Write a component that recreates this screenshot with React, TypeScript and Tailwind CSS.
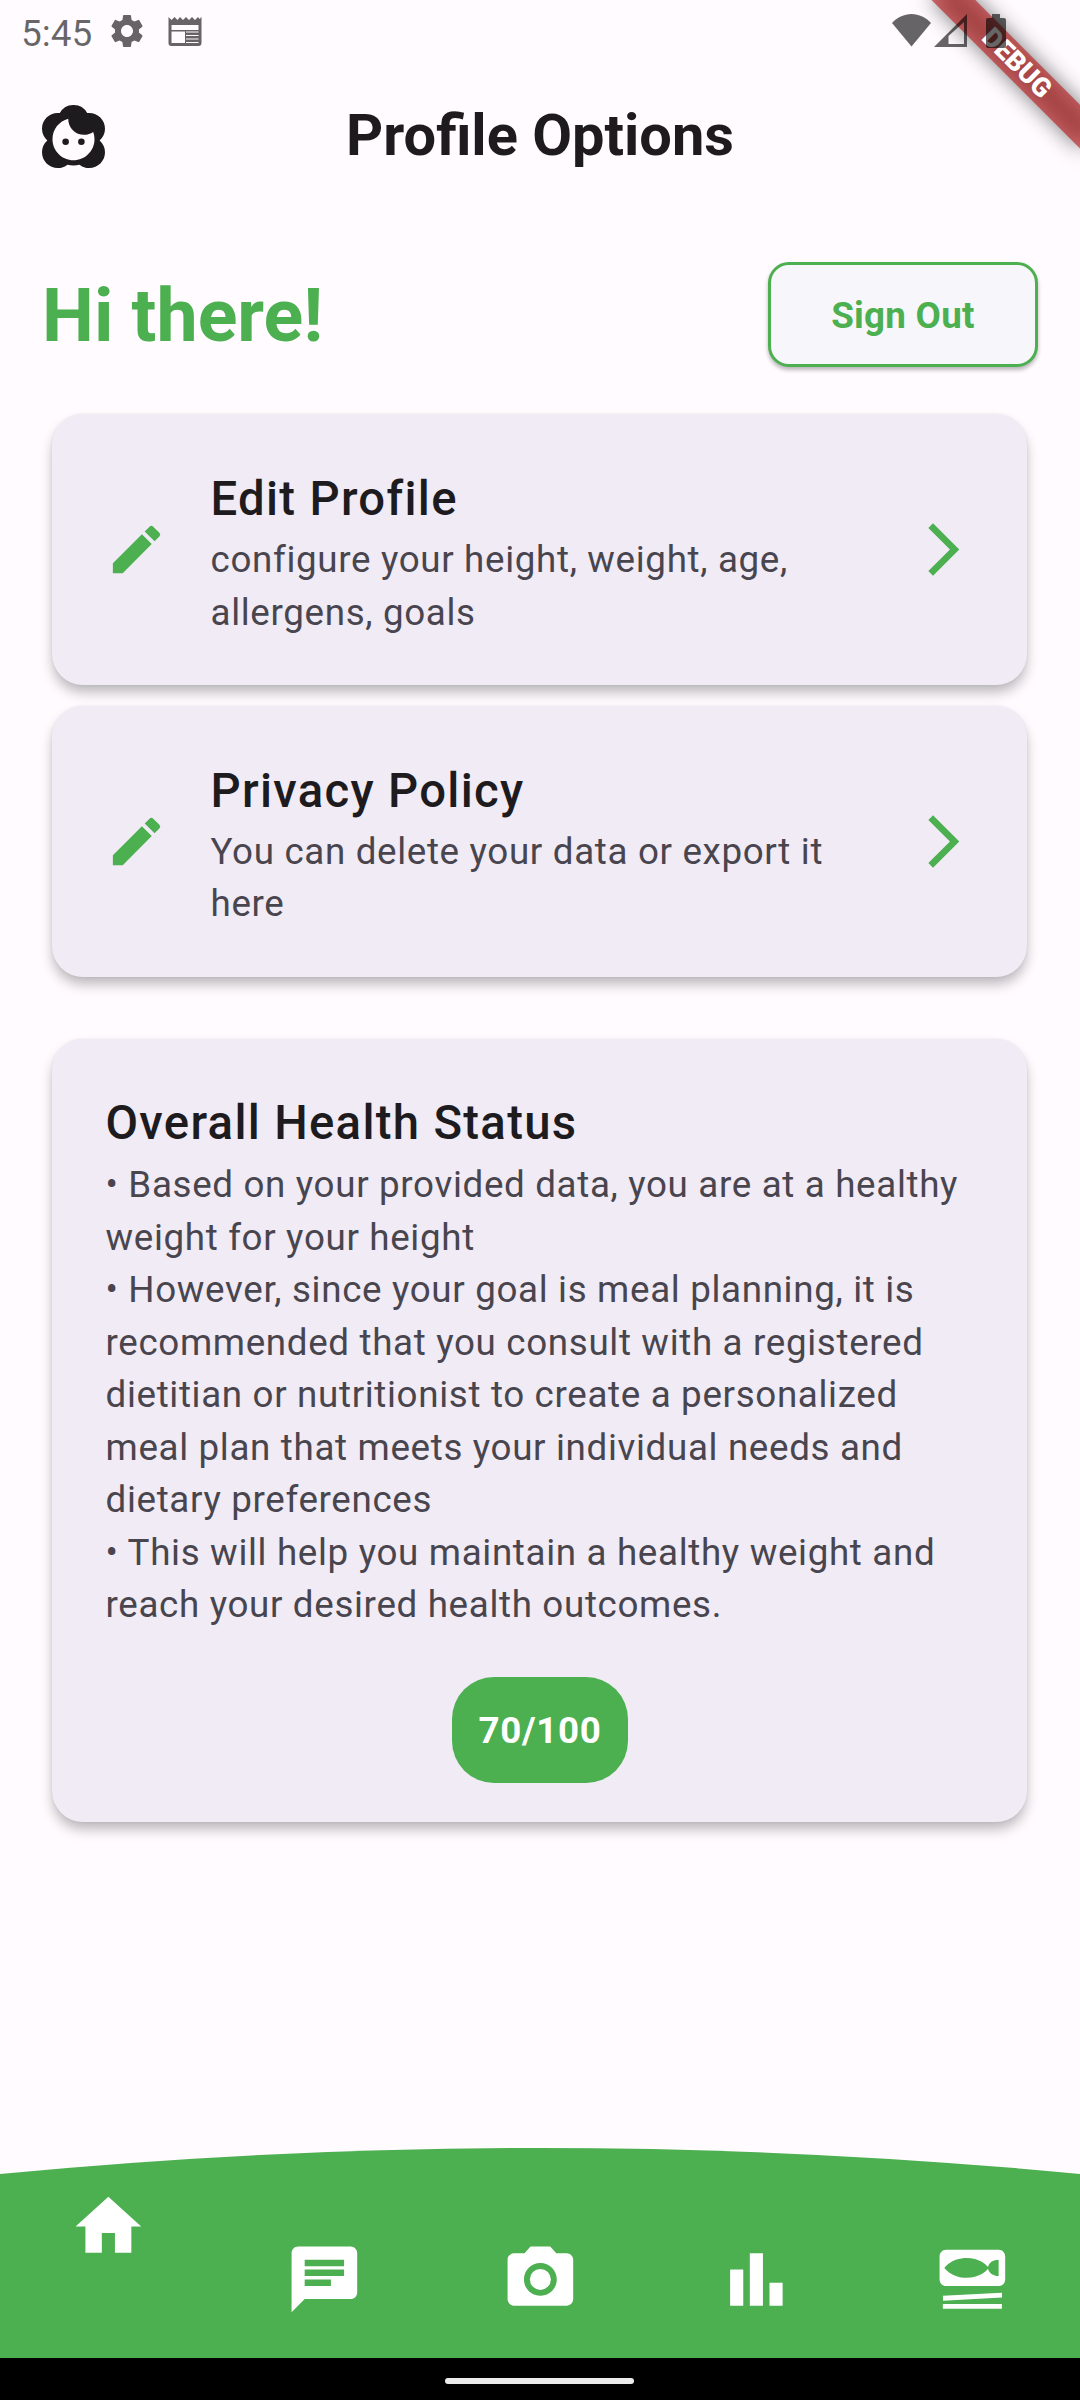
import type { ReactNode } from "react";
import { MdBarChart, MdCameraAlt, MdChat, MdEdit, MdFace2, MdHome, MdSetMeal, MdSettings } from "react-icons/md";

const cardClass =
  "mr-[53px] ml-[52px] rounded-[31px] bg-[#f0ebf5] shadow-[0_8px_13px_-1px_rgba(0,0,0,0.28),0_0_3px_rgba(0,0,0,0.06)]";
const titleClass = "text-[47.25px] leading-[69px] font-medium tracking-[1.31px] text-[#1d1b1e]";
const bodyClass = "text-[36.75px] leading-[52.5px] tracking-[0.66px] text-[#49454e]";

function StatusBar() {
  return (
    <div className="relative z-20 flex h-[63px] shrink-0 items-start text-black/60">
      <span className="ml-[21px] mt-[8px] w-[84px] text-[37px] leading-[52px] whitespace-nowrap">5:45</span>
      <MdSettings className="mt-[11px] ml-[2px] size-[40px]" />
      <svg className="mt-[17px] ml-[21px] h-[29px] w-[34px]" viewBox="0 0 34 29">
        <path
          fill="currentColor"
          fillRule="evenodd"
          d="M.5 0 3.5 3 6.5 0 9.5 3 12 0l3 3 3-3 3 3 3-3 3 3 3-3 1.500 2L33.500 0V26a3 3 0 0 1-3 3H3.500a3 3 0 0 1-3-3ZM3.500 8v5h27V8ZM3.500 14.500V26H17V14.500ZM18 14.500v1h12.500v-1ZM18 18v1h12.500V18ZM18 21.500v1h12.500v-1ZM18 25v1h12.500V25Z"
        />
      </svg>
      <svg className="mt-[14px] ml-auto h-[33px] w-[39px]" viewBox="0 0 39 33">
        <path fill="currentColor" d="M19.500 32.500 0 9C5 3.500 12 0 19.500 0S34 3.500 39 9Z" />
      </svg>
      <svg className="mt-[14px] ml-[3px] h-[33px] w-[33px]" viewBox="0 0 33 33">
        <path fill="currentColor" fillRule="evenodd" d="M33 0V33H0ZM30 8 14.500 22V30H30Z" />
      </svg>
      <svg className="mt-[14px] mr-[74px] ml-[19px] h-[34px] w-[20px]" viewBox="0 0 20 34">
        <path fill="currentColor" d="M6 0h8v4h4a2 2 0 0 1 2 2v26a2 2 0 0 1-2 2H2a2 2 0 0 1-2-2V6a2 2 0 0 1 2-2h4Z" />
      </svg>
    </div>
  );
}

function DebugBanner() {
  return (
    <div className="absolute top-0 right-0 z-10 size-0 origin-top-left rotate-45">
      <div className="absolute top-[73.5px] left-[-105px] h-[31.5px] w-[210px] bg-black/50 blur-[10.4px]" />
      <div className="absolute top-[73.5px] left-[-105px] flex h-[31.5px] w-[210px] items-center justify-center bg-[#b71c1c]/63 text-[26.8px] leading-none font-black text-white">
        DEBUG
      </div>
    </div>
  );
}

function OptionCard({ title, children }: { title: string; children: ReactNode }) {
  return (
    <div className={`${cardClass} flex h-[271px] items-center pr-[52.5px] pl-[53px]`}>
      <MdEdit className="size-[63px] shrink-0 text-[#4caf50]" />
      <div className="mr-[42px] ml-[42.5px] flex-1 pt-[5px]">
        <h2 className={titleClass}>{title}</h2>
        <p className={bodyClass}>{children}</p>
      </div>
      <svg className="size-[63px] shrink-0 text-[#4caf50]" viewBox="0 0 24 24">
        <path fill="currentColor" d="M6.230 20.230 8 22l10-10L8 2 6.230 3.770 14.460 12z" />
      </svg>
    </div>
  );
}

const navIcon = "size-[78.75px]";

function BottomNav() {
  return (
    <nav className="relative mt-auto h-[210px] shrink-0 text-white">
      <svg className="absolute inset-0 h-full w-full" viewBox="0 0 1080 210" preserveAspectRatio="none">
        <path fill="#4caf50" d="M0 26Q540-26 1080 26V210H0Z" />
      </svg>
      <div className="relative grid grid-cols-5 justify-items-center pt-[91.500px]">
        <MdHome className={`${navIcon} -mt-[52.500px]`} />
        <MdChat className={navIcon} />
        <MdCameraAlt className={navIcon} />
        <MdBarChart className={navIcon} />
        <MdSetMeal className={navIcon} />
      </div>
    </nav>
  );
}

export default function App() {
  return (
    <div className="relative flex h-[2400px] w-[1080px] flex-col overflow-hidden bg-[#fffbff] font-['Roboto',sans-serif]">
      <StatusBar />
      <DebugBanner />
      <header className="grid h-[147px] shrink-0 grid-cols-[147px_1fr_147px] items-center">
        <MdFace2 className="ml-[42px] size-[63px] text-[#1d1b1e]" />
        <h1 className="pb-[4px] text-center text-[57.75px] leading-[72px] font-bold text-[#1d1b1e]">Profile Options</h1>
      </header>
      <div className="mt-[52.4px] flex h-[105px] shrink-0 items-center justify-between px-[42px]">
        <span className="pt-[2px] text-[73.5px] leading-[86px] font-bold text-[#4caf50]">Hi there!</span>
        <button className="flex h-[105px] w-[270px] items-center justify-center rounded-[21px] border-[3px] border-[#4caf50] bg-[#f7f7fb] pt-[2px] text-[36.75px] font-bold tracking-[0.26px] text-[#4caf50] shadow-[0_3px_4px_rgba(0,0,0,0.28)]">
          Sign Out
        </button>
      </div>
      <main className="mt-[46.8px] flex flex-col">
        <OptionCard title="Edit Profile">configure your height, weight, age, allergens, goals</OptionCard>
        <div className="h-[20.500px]" />
        <OptionCard title="Privacy Policy">You can delete your data or export it here</OptionCard>
        <section className={`${cardClass} mt-[62.8px] h-[782.3px] px-[53.5px] pt-[49.7px]`}>
          <h2 className={titleClass}>Overall Health Status</h2>
          <div className={`${bodyClass} pt-px`}>
            <p>• Based on your provided data, you are at a healthy weight for your height</p>
            <p>
              • However, since your goal is meal planning, it is recommended that you consult with a registered dietitian
              or nutritionist to create a personalized meal plan that meets your individual needs and dietary preferences
            </p>
            <p>• This will help you maintain a healthy weight and reach your desired health outcomes.</p>
          </div>
          <div className="mx-auto mt-[45.5px] flex h-[105.5px] w-[176px] items-center justify-center rounded-[42px] bg-[#4caf50] pt-[2px] pl-px text-[36.75px] font-bold tracking-[0.66px] text-white">
            70/100
          </div>
        </section>
      </main>
      <BottomNav />
      <div className="flex h-[42px] shrink-0 justify-center bg-black pt-[20px]">
        <div className="mr-px h-[6px] w-[189px] rounded-full bg-[#ececec]" />
      </div>
    </div>
  );
}
